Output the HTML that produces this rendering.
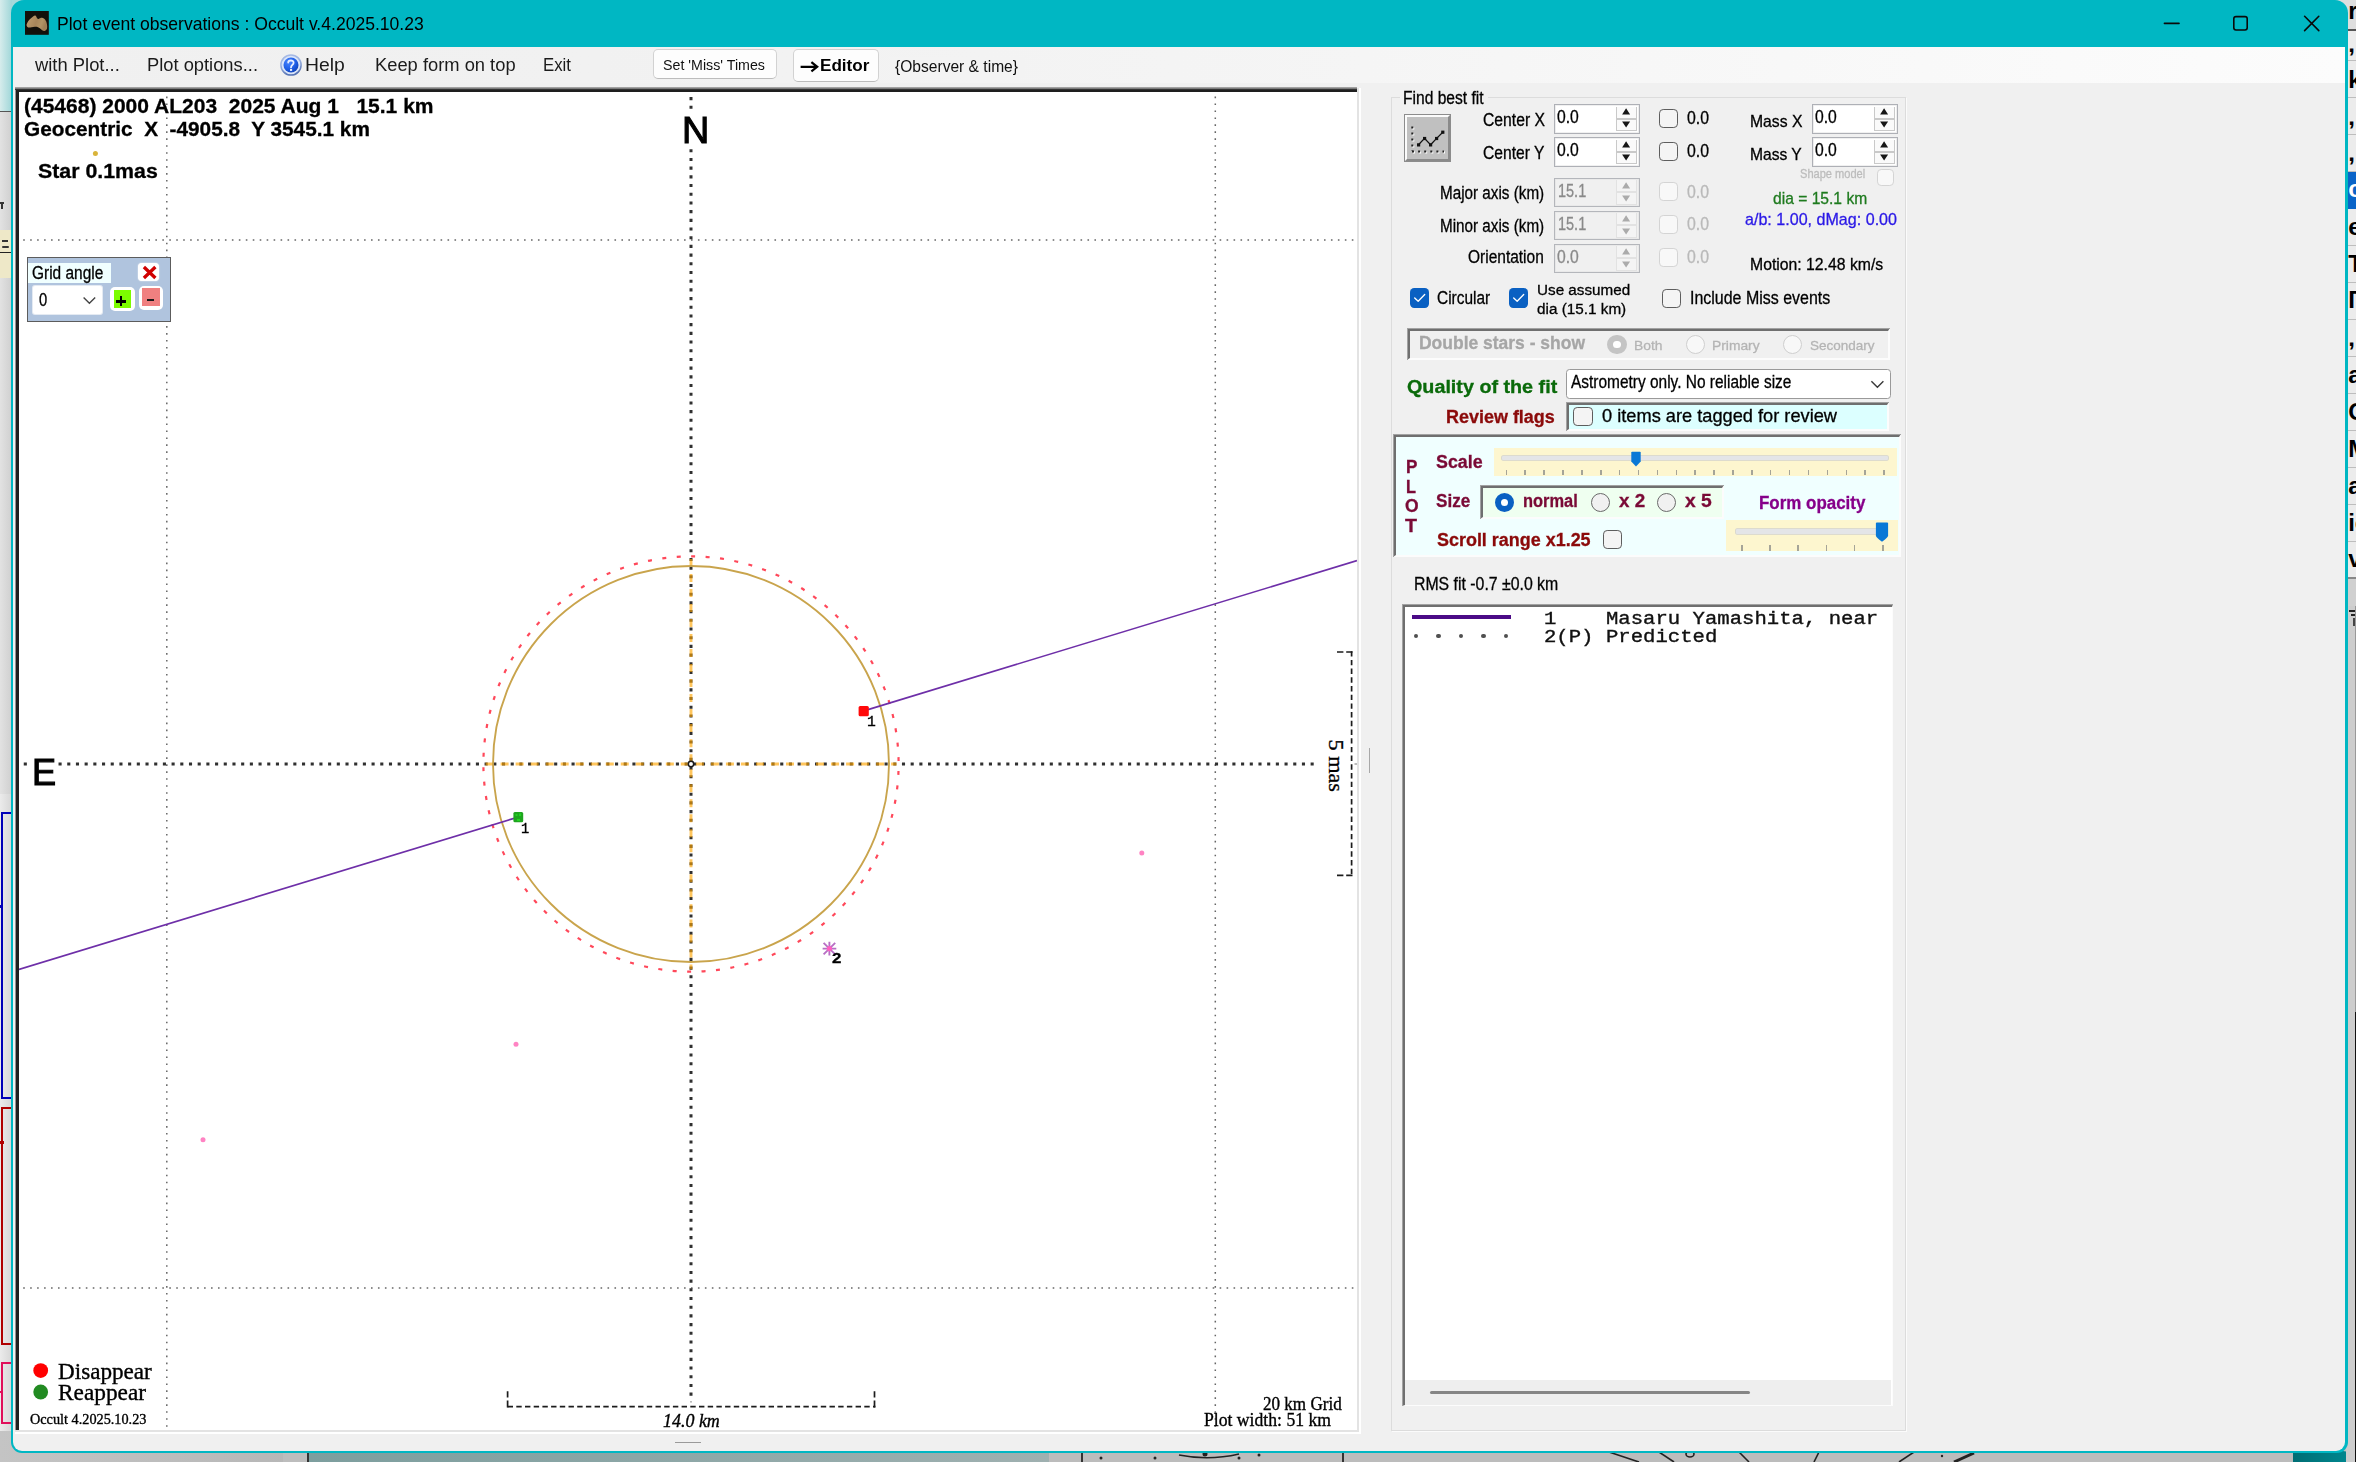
<!DOCTYPE html>
<html><head><meta charset="utf-8"><title>Plot event observations</title>
<style>
html,body{margin:0;padding:0;}
html{width:2356px;height:1462px;overflow:hidden;}
body{width:2356px;height:1462px;position:relative;overflow:hidden;background:#c2c2c2;font-family:"Liberation Sans",sans-serif;}
div,span,svg{position:absolute;}
span{white-space:pre;transform-origin:0 0;display:block;}
</style></head><body>
<div style="left:0;top:0;width:2356px;height:1462px;overflow:hidden">
<div style="left:0px;top:0px;width:12px;height:112px;background:linear-gradient(to right,#d6ecec,#9fd6d8);"></div>
<div style="left:12px;top:0px;width:16px;height:16px;background:#a6d8da;"></div>
<div style="left:0px;top:111px;width:12px;height:1px;background:#555;"></div>
<div style="left:0px;top:112px;width:12px;height:682px;background:linear-gradient(to right,#e2e2e2,#cfcfcf);"></div>
<div style="left:0px;top:794px;width:12px;height:637px;background:linear-gradient(to right,#ebebeb,#d6d6d6);"></div>
<div style="left:0px;top:230px;width:12px;height:48px;background:#eee8c8;"></div>
<div style="left:0px;top:252px;width:12px;height:1px;background:#222;"></div>
<div style="left:2px;top:240px;width:6px;height:2px;background:#333;"></div>
<div style="left:2px;top:246px;width:7px;height:2px;background:#333;border-radius:1px"></div>
<div style="left:0px;top:202px;width:4px;height:2px;background:#333;"></div>
<div style="left:1px;top:204px;width:2px;height:5px;background:#333;"></div>
<div style="left:1px;top:812px;width:14px;height:287px;border:2px solid #0000b8;border-right:none;box-sizing:border-box"></div>
<div style="left:1px;top:1107px;width:14px;height:238px;border:2px solid #b00000;border-right:none;box-sizing:border-box"></div>
<div style="left:1px;top:1362px;width:14px;height:62px;border:2px solid #e0105a;border-right:none;box-sizing:border-box"></div>
<div style="left:0px;top:905px;width:3px;height:3px;background:#0000b8;"></div>
<div style="left:0px;top:1141px;width:4px;height:3px;background:#b00000;"></div>
<div style="left:0px;top:1391px;width:3px;height:2px;background:#e0105a;"></div>
<div style="left:0px;top:1431px;width:308px;height:31px;background:linear-gradient(to right,#c4c4c4,#b6b6b6);"></div>
<div style="left:283px;top:1431px;width:25px;height:31px;background:#bdbdbd;"></div>
<div style="left:307px;top:1450px;width:2px;height:12px;background:#333;"></div>
<div style="left:309px;top:1450px;width:740px;height:12px;background:linear-gradient(to right,#7d9e9e,#9fb0b0);"></div>
<div style="left:1049px;top:1450px;width:1244px;height:12px;background:#bcbcbc;"></div>
<div style="left:1081px;top:1450px;width:2px;height:12px;background:#333;"></div>
<div style="left:1342px;top:1450px;width:2px;height:12px;background:#333;"></div>
<svg style="left:1049px;top:1452px" width="1250" height="10" viewBox="0 0 1250 10"><g fill="none" stroke="#222" stroke-width="1.6"><path d="M560 0 L590 10"/><path d="M610 0 L625 10"/><path d="M690 0 L700 10"/><path d="M770 0 L765 10"/><path d="M865 0 L850 10"/><path d="M925 1 L905 10" stroke-width="3"/><ellipse cx="641" cy="2" rx="4" ry="3"/><path d="M130 3 q30 6 60 -1"/></g><g fill="#222"><circle cx="52" cy="6" r="1.5"/><circle cx="106" cy="6" r="1.5"/><circle cx="156" cy="2" r="2.5"/><circle cx="190" cy="6" r="1.5"/><circle cx="210" cy="3" r="1.5"/><circle cx="893" cy="4" r="1.2"/></g></svg>
<div style="left:2293px;top:1451px;width:58px;height:14px;background:linear-gradient(to right,#006e74,#008890);border-top-right-radius:8px"></div>
<div style="left:2330px;top:0px;width:26px;height:578px;background:#ececec;"></div>
<div style="left:2330px;top:0px;width:26px;height:29.5px;background:#dedede;"></div>
<div style="left:2346px;top:29px;width:10px;height:1.6px;background:#555;"></div>
<div style="left:2346px;top:60px;width:10px;height:1.2px;background:#bdbdbd;"></div>
<div style="left:2346px;top:97px;width:10px;height:1.2px;background:#bdbdbd;"></div>
<div style="left:2346px;top:134px;width:10px;height:1.2px;background:#bdbdbd;"></div>
<div style="left:2346px;top:171px;width:10px;height:1.2px;background:#bdbdbd;"></div>
<div style="left:2346px;top:208px;width:10px;height:1.2px;background:#bdbdbd;"></div>
<div style="left:2346px;top:245px;width:10px;height:1.2px;background:#bdbdbd;"></div>
<div style="left:2346px;top:282px;width:10px;height:1.2px;background:#bdbdbd;"></div>
<div style="left:2346px;top:319px;width:10px;height:1.2px;background:#bdbdbd;"></div>
<div style="left:2346px;top:356px;width:10px;height:1.2px;background:#bdbdbd;"></div>
<div style="left:2346px;top:393px;width:10px;height:1.2px;background:#bdbdbd;"></div>
<div style="left:2346px;top:430px;width:10px;height:1.2px;background:#bdbdbd;"></div>
<div style="left:2346px;top:467px;width:10px;height:1.2px;background:#bdbdbd;"></div>
<div style="left:2346px;top:504px;width:10px;height:1.2px;background:#bdbdbd;"></div>
<div style="left:2346px;top:541px;width:10px;height:1.2px;background:#bdbdbd;"></div>
<div style="left:2346px;top:172px;width:10px;height:36.5px;background:#0a64c8;"></div>
<div style="left:2346px;top:577px;width:10px;height:2px;background:#888;"></div>
<div style="left:2346px;top:579px;width:10px;height:27px;background:#d0d0d0;"></div>
<div style="left:2346px;top:606px;width:10px;height:856px;background:#cdcdcd;"></div>
<div style="left:2354.6px;top:606px;width:1.4px;height:406px;background:#999;"></div>
<div style="left:2354.6px;top:1012px;width:1.4px;height:450px;background:#111;"></div>
<span style="left:2348.2px;top:-1.3000000000000007px;font-size:24px;line-height:24px;font-weight:bold;color:#000">r</span>
<span style="left:2348.2px;top:31.7px;font-size:24px;line-height:24px;font-weight:bold;color:#000">,</span>
<span style="left:2348.2px;top:67.7px;font-size:24px;line-height:24px;font-weight:bold;color:#000">k</span>
<span style="left:2348.2px;top:104.7px;font-size:24px;line-height:24px;font-weight:bold;color:#000">,</span>
<span style="left:2348.2px;top:140.7px;font-size:24px;line-height:24px;font-weight:bold;color:#000">,</span>
<span style="left:2348.2px;top:176.7px;font-size:24px;line-height:24px;font-weight:bold;color:#fff">c</span>
<span style="left:2348.2px;top:214.7px;font-size:24px;line-height:24px;font-weight:bold;color:#000">e</span>
<span style="left:2348.2px;top:251.7px;font-size:24px;line-height:24px;font-weight:bold;color:#000">T</span>
<span style="left:2348.2px;top:287.7px;font-size:24px;line-height:24px;font-weight:bold;color:#000">Γ</span>
<span style="left:2348.2px;top:325.7px;font-size:24px;line-height:24px;font-weight:bold;color:#000">,</span>
<span style="left:2348.2px;top:362.7px;font-size:24px;line-height:24px;font-weight:bold;color:#000">a</span>
<span style="left:2348.2px;top:399.7px;font-size:24px;line-height:24px;font-weight:bold;color:#000">G</span>
<span style="left:2348.2px;top:436.7px;font-size:24px;line-height:24px;font-weight:bold;color:#000">M</span>
<span style="left:2348.2px;top:473.7px;font-size:24px;line-height:24px;font-weight:bold;color:#000">a</span>
<span style="left:2348.2px;top:510.7px;font-size:24px;line-height:24px;font-weight:bold;color:#000">ic</span>
<span style="left:2348.2px;top:546.7px;font-size:24px;line-height:24px;font-weight:bold;color:#000">va</span>
<div style="left:2349px;top:610px;width:6px;height:2px;background:#222;"></div>
<div style="left:2351px;top:614px;width:4px;height:2px;background:#222;"></div>
<div style="left:2353px;top:618px;width:2px;height:8px;background:#444;"></div>
<div style="left:11px;top:0;width:2337px;height:1453px;background:rgb(0,183,195);border-radius:13px 13px 11px 11px"></div>
<div style="left:13px;top:47px;width:2332px;height:1404px;background:#f0f0f0;border-radius:0 0 9px 9px"></div>
<div style="left:13px;top:47px;width:2332px;height:36px;background:linear-gradient(to right,#f0f0f0 0%,#f1f1f1 25%,#f5f5f5 58%,#fcfcfc 100%);"></div>
<svg style="left:25px;top:11px" width="24" height="24" viewBox="0 0 24 24"><defs><filter id="ib" x="-10%" y="-10%" width="120%" height="120%"><feGaussianBlur stdDeviation="0.35"/></filter><linearGradient id="ig" x1="0" y1="0" x2="1" y2="0.3"><stop offset="0" stop-color="#c2a072"/><stop offset="0.55" stop-color="#a8865a"/><stop offset="0.8" stop-color="#b39466"/><stop offset="1" stop-color="#a08056"/></linearGradient></defs><rect width="23.8" height="23.8" fill="#12100b"/><path filter="url(#ib)" fill="url(#ig)" d="M10.2 4.5 C11 4.6 11.6 6.2 12.1 7.3 C12.6 7.9 13 8.1 13.6 8.0 C14.8 7.2 16 6.5 17.0 6.7 C18.4 7 19.4 7.8 20.2 8.7 C21.2 10 21.7 11.4 21.9 12.9 C22.2 14.4 22.3 15.8 22.1 16.9 C21.9 18.2 21.4 19 20.5 19.4 C19.7 19.9 18.8 20 18.1 19.8 C17.2 19.4 16.5 18.6 15.8 18.0 C14.9 17.2 14 16.6 13.0 16.2 C12 15.8 11 15.7 10.0 15.8 C8.8 15.9 7.6 16.1 6.5 16.2 C5.5 16.4 4.6 16.6 3.7 16.5 C2.9 16.4 2.2 15.9 1.9 15.2 C1.6 14.6 1.5 14 1.6 13.4 C2 12.1 2.6 11 3.3 9.9 C4.1 8.9 5 8 6.0 7.3 C6.8 6.5 7.6 5.8 8.4 5.2 C9 4.7 9.6 4.4 10.2 4.5 Z"/></svg>
<span style="left:57.00px;top:15.73px;font-family:'Liberation Sans',sans-serif;font-size:17.8px;line-height:17.8px;color:#000;transform:scaleX(0.9878);">Plot event observations : Occult v.4.2025.10.23</span>
<svg style="left:2150px;top:0" width="190" height="47" viewBox="0 0 190 47"><g fill="none" stroke="#0a0a0a" stroke-width="1.6" stroke-linecap="round"><path d="M14.4 23.4 H29"/><rect x="83.8" y="16.6" width="13.4" height="13.4" rx="2.2"/><path d="M154.6 16.3 L168.8 30.6 M168.8 16.3 L154.6 30.6"/></g></svg>
<span style="left:34.80px;top:55.76px;font-family:'Liberation Sans',sans-serif;font-size:18px;line-height:18px;color:#1b1b1b;transform:scaleX(1.0213);">with Plot...</span>
<span style="left:147.20px;top:55.76px;font-family:'Liberation Sans',sans-serif;font-size:18px;line-height:18px;color:#1b1b1b;transform:scaleX(1.0176);">Plot options...</span>
<span style="left:305.40px;top:55.76px;font-family:'Liberation Sans',sans-serif;font-size:18px;line-height:18px;color:#1b1b1b;transform:scaleX(1.0748);">Help</span>
<span style="left:374.60px;top:55.76px;font-family:'Liberation Sans',sans-serif;font-size:18px;line-height:18px;color:#1b1b1b;transform:scaleX(1.0181);">Keep form on top</span>
<span style="left:543.30px;top:55.76px;font-family:'Liberation Sans',sans-serif;font-size:18px;line-height:18px;color:#1b1b1b;transform:scaleX(0.9328);">Exit</span>
<svg style="left:278.9px;top:53.2px" width="24" height="24" viewBox="0 0 24 24"><defs><radialGradient id="hg" cx="0.35" cy="0.3" r="0.85"><stop offset="0" stop-color="#4a86ff"/><stop offset="0.55" stop-color="#1f5ee6"/><stop offset="1" stop-color="#0b3aa8"/></radialGradient><linearGradient id="hr" x1="0" y1="0" x2="0.3" y2="1"><stop offset="0" stop-color="#a9bce6"/><stop offset="0.5" stop-color="#9cb2e0"/><stop offset="1" stop-color="#5673b4"/></linearGradient></defs><circle cx="12" cy="12" r="10.1" fill="#dbe5f8" stroke="url(#hr)" stroke-width="1.5"/><circle cx="12" cy="12" r="7.5" fill="url(#hg)"/><path d="M9.2 9.6 C9.2 6.9 14.6 6.7 14.6 9.7 C14.6 11.7 12.0 12.1 12.0 14.4" stroke="#e8efff" stroke-width="1.8" fill="none" stroke-linecap="round"/><rect x="11.0" y="16.0" width="2.1" height="1.9" fill="#e8efff"/></svg>
<div style="left:653px;top:49px;width:124px;height:30px;box-sizing:border-box;background:#fdfdfd;border:1px solid #d2d2d2;border-bottom-color:#bcbcbc;border-radius:5px"></div>
<span style="left:662.50px;top:56.80px;font-family:'Liberation Sans',sans-serif;font-size:15.0px;line-height:15.0px;color:#111;transform:scaleX(0.9495);">Set &#x27;Miss&#x27; Times</span>
<div style="left:793px;top:49px;width:86px;height:32.5px;box-sizing:border-box;background:#fdfdfd;border:1px solid #d2d2d2;border-bottom-color:#bcbcbc;border-radius:5px"></div>
<svg style="left:799px;top:58px" width="22" height="18" viewBox="0 0 22 18"><path d="M1.6 8.8 H17.6 M12.4 4.2 L18.2 8.8 L12.4 13.4" fill="none" stroke="#000" stroke-width="2.2" stroke-linejoin="miter"/></svg>
<span style="left:819.60px;top:56.87px;font-family:'Liberation Sans',sans-serif;font-size:17.4px;line-height:17.4px;color:#000;font-weight:bold;transform:scaleX(0.9831);">Editor</span>
<div style="left:890px;top:57px;width:134px;height:20px;background:#f3f3f3;"></div>
<span style="left:895.00px;top:58.44px;font-family:'Liberation Sans',sans-serif;font-size:17.2px;line-height:17.2px;color:#111;transform:scaleX(0.9067);">{Observer &amp; time}</span>
<div style="left:15px;top:88px;width:1346px;height:1346px;background:#fff;"></div>
<div style="left:15px;top:88px;width:1344px;height:1344px;background:#e3e3e3;"></div>
<div style="left:15px;top:87.4px;width:1342px;height:1342.6px;background:linear-gradient(#b4b4b4,#6a6a6a 2px,#333 2.4px);"></div>
<div style="left:15px;top:89.6px;width:1342px;height:1340.4px;background:linear-gradient(to right,#b0b0b0,#6a6a6a 1.2px,#2a2a2a 1.6px);"></div>
<div style="left:16.2px;top:89.6px;width:1340.8px;height:1340.4px;background:#1e1e1e;"></div>
<div style="left:19px;top:92px;width:1338px;height:1338px;background:#fff;"></div>
<svg style="left:19px;top:92px" width="1338" height="1338" viewBox="19 92 1338 1338"><path d="M166.8 96.55 V1430" stroke="#000" stroke-opacity="0.6" stroke-width="1.5" stroke-dasharray="1.6 5.356" fill="none"/><path d="M1215.3 96.55 V1430" stroke="#000" stroke-opacity="0.6" stroke-width="1.5" stroke-dasharray="1.6 5.356" fill="none"/><path d="M23.2 239.9 H1357" stroke="#000" stroke-opacity="0.6" stroke-width="1.5" stroke-dasharray="1.6 5.356" fill="none"/><path d="M23.2 1288.0 H1357" stroke="#000" stroke-opacity="0.6" stroke-width="1.5" stroke-dasharray="1.6 5.356" fill="none"/><path d="M691.0 97.05 V1397" stroke="#303030" stroke-width="3.0" stroke-dasharray="3.1 5.595" fill="none"/><path d="M23.75 764.0 H1318" stroke="#303030" stroke-width="3.0" stroke-dasharray="3.1 5.595" fill="none"/><rect x="1354.5" y="763" width="2.5" height="2" fill="#bbb"/><rect x="690" y="1401" width="2" height="1.6" fill="#bbb"/><path d="M485.6 764.0 H896.6" stroke="rgb(255,165,0)" stroke-opacity="0.63" stroke-width="2.9" stroke-dasharray="8.0 7.02" fill="none"/><path d="M691.0 558.9 V969.3" stroke="rgb(255,165,0)" stroke-opacity="0.63" stroke-width="2.9" stroke-dasharray="8.0 7.02" fill="none"/><circle cx="691.0" cy="764.0" r="198" fill="none" stroke="#c9a44c" stroke-width="1.85"/><circle cx="691.0" cy="764.0" r="207.6" fill="none" stroke="#ff2036" stroke-opacity="0.82" stroke-width="2.2" stroke-dasharray="4.0 10.4934" stroke-dashoffset="-7.0"/><path d="M19 969.4 L514 818.4" stroke="#6e2fa8" stroke-width="1.65" fill="none"/><path d="M868 709.6 L1357 560.6" stroke="#6e2fa8" stroke-width="1.65" fill="none"/><circle cx="691.0" cy="764.0" r="2.7" fill="#fff" stroke="#1a1a1a" stroke-width="1.5"/><rect x="858.6" y="705.9" width="10.2" height="10.4" rx="1.5" fill="#ff0a0a"/><rect x="513.4" y="812.0" width="9.8" height="10.2" rx="1.5" fill="#1fa51f"/><path d="M515.5 814 h2 v2 h-2z M519 813.5 h2 v2.5 h-2z M517 819 h3 v2 h-3z" fill="#22e022" fill-opacity="0.8"/><g stroke="#b86fc4" stroke-width="1.9" stroke-linecap="butt"><path d="M822.6 948.6 H836.3 M829.4 941.8 V955.4 M823.6 942.8 L835.2 954.4 M835.2 942.8 L823.6 954.4"/></g><circle cx="829.4" cy="948.6" r="2.6" fill="#ff5fc0"/><circle cx="1141.8" cy="853.0" r="2.5" fill="#ff7cc0" fill-opacity="0.95"/><circle cx="516.0" cy="1044.2" r="2.5" fill="#ff7cc0" fill-opacity="0.95"/><circle cx="203.0" cy="1139.8" r="2.5" fill="#ff7cc0" fill-opacity="0.95"/><circle cx="95.4" cy="153.4" r="2.5" fill="#d9b43a"/><path d="M507.6 1406.6 H875.4" stroke="#1c1c1c" stroke-width="1.7" stroke-dasharray="5.4 3.3" fill="none"/><path d="M507.6 1391.2 V1397.4 M507.6 1400.4 V1407.5 M874.5 1391.2 V1397.4 M874.5 1400.4 V1407.5" stroke="#1c1c1c" stroke-width="1.7" fill="none"/><path d="M1351.6 651.2 V876.2" stroke="#1c1c1c" stroke-width="1.7" stroke-dasharray="5.4 3.3" fill="none"/><path d="M1337 652 H1343.4 M1346.2 652 H1352.5 M1337 875.3 H1343.4 M1346.2 875.3 H1352.5" stroke="#1c1c1c" stroke-width="1.7" fill="none"/><rect x="1322" y="734" width="26" height="62" fill="#fff"/><text x="0" y="0" transform="translate(1329.3 739.5) rotate(90)" font-family="Liberation Serif, serif" font-size="20" textLength="52.5" lengthAdjust="spacingAndGlyphs" fill="#000" stroke="#000" stroke-width="0.3">5 mas</text><circle cx="40.7" cy="1370.6" r="7.4" fill="#ff0000"/><circle cx="40.7" cy="1392.0" r="7.4" fill="#228b22"/></svg>
<div style="left:682px;top:113px;width:28px;height:34px;background:#fff;"></div>
<span style="left:682.20px;top:112.00px;font-family:'Liberation Sans',sans-serif;font-size:37.8px;line-height:37.8px;color:#000;transform:scaleX(1.0001);-webkit-text-stroke:1.1px;">N</span>
<div style="left:30px;top:756px;width:28px;height:31px;background:#fff;"></div>
<span style="left:31.70px;top:753.50px;font-family:'Liberation Sans',sans-serif;font-size:37.8px;line-height:37.8px;color:#000;transform:scaleX(0.9556);-webkit-text-stroke:1.1px;">E</span>
<span style="left:24.30px;top:95.52px;font-family:'Liberation Sans',sans-serif;font-size:20.3px;line-height:20.3px;color:#000;font-weight:bold;transform:scaleX(1.0358);-webkit-text-stroke:0.3px;">(45468) 2000 AL203  2025 Aug 1   15.1 km</span>
<span style="left:24.30px;top:119.42px;font-family:'Liberation Sans',sans-serif;font-size:20.3px;line-height:20.3px;color:#000;font-weight:bold;transform:scaleX(1.0249);-webkit-text-stroke:0.3px;">Geocentric  X  -4905.8  Y 3545.1 km</span>
<span style="left:37.70px;top:161.42px;font-family:'Liberation Sans',sans-serif;font-size:20.3px;line-height:20.3px;color:#000;font-weight:bold;transform:scaleX(1.0520);-webkit-text-stroke:0.3px;">Star 0.1mas</span>
<span style="left:866.60px;top:715.49px;font-family:'Liberation Mono',monospace;font-size:14.5px;line-height:14.5px;color:#000;transform:scaleX(1.0111);-webkit-text-stroke:0.35px #000;">1</span>
<span style="left:521.00px;top:821.69px;font-family:'Liberation Mono',monospace;font-size:14.5px;line-height:14.5px;color:#000;transform:scaleX(0.9422);-webkit-text-stroke:0.35px #000;">1</span>
<span style="left:831.80px;top:951.38px;font-family:'Liberation Sans',sans-serif;font-size:14.2px;line-height:14.2px;color:#000;font-weight:bold;transform:scaleX(1.1913);-webkit-text-stroke:0.3px;">2</span>
<span style="left:58.20px;top:1360.56px;font-family:'Liberation Serif',serif;font-size:22.5px;line-height:22.5px;color:#000;transform:scaleX(1.0283);-webkit-text-stroke:0.35px;">Disappear</span>
<span style="left:58.20px;top:1381.86px;font-family:'Liberation Serif',serif;font-size:22.5px;line-height:22.5px;color:#000;transform:scaleX(1.0359);-webkit-text-stroke:0.35px;">Reappear</span>
<span style="left:29.80px;top:1412.02px;font-family:'Liberation Serif',serif;font-size:14.3px;line-height:14.3px;color:#000;transform:scaleX(0.9970);-webkit-text-stroke:0.35px;">Occult 4.2025.10.23</span>
<span style="left:662.60px;top:1412.01px;font-family:'Liberation Serif',serif;font-size:18.5px;line-height:18.5px;color:#000;font-style:italic;transform:scaleX(0.9696);-webkit-text-stroke:0.35px;">14.0 km</span>
<span style="left:1262.50px;top:1396.29px;font-family:'Liberation Serif',serif;font-size:17.8px;line-height:17.8px;color:#000;transform:scaleX(0.9598);-webkit-text-stroke:0.35px;">20 km Grid</span>
<span style="left:1204.20px;top:1411.49px;font-family:'Liberation Serif',serif;font-size:18.4px;line-height:18.4px;color:#000;transform:scaleX(0.9597);-webkit-text-stroke:0.35px;">Plot width: 51 km</span>
<div style="left:26.5px;top:257px;width:144px;height:64.5px;box-sizing:border-box;background:#b0c4de;border:1.6px solid #5c5c5c"></div>
<div style="left:28px;top:263px;width:83px;height:19.5px;background:#f0ffff;"></div>
<span style="left:32.00px;top:265.19px;font-family:'Liberation Sans',sans-serif;font-size:17.5px;line-height:17.5px;color:#000;transform:scaleX(0.8830);-webkit-text-stroke:0.3px;">Grid angle</span>
<div style="left:33.4px;top:285.8px;width:68.6px;height:28.2px;background:#fff;border-radius:2px;box-shadow:0 0 0 1px #e4eaf2"></div>
<span style="left:39.40px;top:291.79px;font-family:'Liberation Sans',sans-serif;font-size:17.5px;line-height:17.5px;color:#000;transform:scaleX(0.8424);-webkit-text-stroke:0.3px;">0</span>
<svg style="left:82px;top:295px" width="16" height="11" viewBox="0 0 16 11"><path d="M1.6 2.6 L7.4 8.2 L13.2 2.6" fill="none" stroke="#444" stroke-width="1.4"/></svg>
<div style="left:138.4px;top:262.6px;width:20.2px;height:18.2px;background:#fff;border-radius:4px;box-shadow:0 0 1.5px #fff"></div>
<svg style="left:142px;top:264.5px" width="15" height="15" viewBox="0 0 15 15"><path d="M1.9 2 L13.4 13 M13.4 2 L1.9 13" stroke="#d00000" stroke-width="3.3" fill="none"/></svg>
<div style="left:110.2px;top:287.0px;width:24.4px;height:24.4px;background:#fff;border-radius:5px"></div>
<div style="left:113.5px;top:290.2px;width:17.9px;height:17.6px;background:#7cfc00;"></div>
<div style="left:116.4px;top:300.0px;width:9.4px;height:2.5px;background:#000;"></div>
<div style="left:119.9px;top:296.4px;width:2.5px;height:9.6px;background:#000;"></div>
<div style="left:138.9px;top:285.8px;width:24.2px;height:24.0px;background:#fff;border-radius:5px"></div>
<div style="left:141.9px;top:288.3px;width:18.2px;height:18.0px;background:#f08080;"></div>
<div style="left:146.6px;top:298.6px;width:7.6px;height:2.4px;background:#1a1a1a;"></div>
<div style="left:1369px;top:748px;width:1.4px;height:25px;background:#a8a8a8;"></div>
<div style="left:675px;top:1442px;width:26px;height:1.4px;background:#9a9a9a;"></div>
<div style="left:1391px;top:97px;width:514.5px;height:1334px;box-sizing:border-box;border:1px solid #dcdcdc;box-shadow:1px 1px 0 #fbfbfb"></div>
<div style="left:1400px;top:90px;width:88px;height:16px;background:#f0f0f0;"></div>
<span style="left:1402.80px;top:89.59px;font-family:'Liberation Sans',sans-serif;font-size:17.5px;line-height:17.5px;color:#000;transform:scaleX(0.8909);-webkit-text-stroke:0.3px;">Find best fit</span>
<div style="left:1403.5px;top:114.3px;width:47.8px;height:48px;box-sizing:border-box;background:#c0c0c0;border-top:3.5px solid #fbfbfb;border-left:3.5px solid #fbfbfb;border-bottom:3.5px solid #8a8a8a;border-right:3.5px solid #8a8a8a;outline:1px solid #8c8c8c;outline-offset:-1px"></div>
<svg style="left:1403.5px;top:114.8px" width="48" height="47" viewBox="0 0 48 47"><path d="M9.3 12.5 V37" stroke="#fff" stroke-width="2" stroke-dasharray="2 4" fill="none"/><path d="M9 37.4 H41" stroke="#fff" stroke-width="2" stroke-dasharray="2 4.1" fill="none"/><path d="M8.3 11.5 V36" stroke="#222" stroke-width="2" stroke-dasharray="2 4" fill="none"/><path d="M8 36.4 H40" stroke="#222" stroke-width="2" stroke-dasharray="2 4.1" fill="none"/><path d="M14.5 29.8 L20.5 23.4 L26.6 29.8 L32.6 23.4 L38.8 17.2" stroke="#111" stroke-width="1.25" fill="none"/><g fill="#111"><rect x="13" y="28.3" width="3.2" height="3.2"/><rect x="19" y="21.9" width="3.2" height="3.2"/><rect x="25" y="28.3" width="3.2" height="3.2"/><rect x="31" y="21.9" width="3.2" height="3.2"/><rect x="37.2" y="15.6" width="3.2" height="3.2"/></g></svg>
<span style="left:1482.60px;top:111.59px;font-family:'Liberation Sans',sans-serif;font-size:17.5px;line-height:17.5px;color:#000;transform:scaleX(0.8977);-webkit-text-stroke:0.3px;">Center X</span>
<span style="left:1482.60px;top:144.79px;font-family:'Liberation Sans',sans-serif;font-size:17.5px;line-height:17.5px;color:#000;transform:scaleX(0.8931);-webkit-text-stroke:0.3px;">Center Y</span>
<div style="left:1553.8px;top:104.2px;width:86.6px;height:29.6px;box-sizing:border-box;background:#fff;border:1.9px solid #aeb0b6;box-shadow:inset 0 0 0 0.8px rgba(225,225,225,0.7)"></div>
<div style="left:1616.4px;top:106.60000000000001px;width:20.4px;height:24.6px;background:#c9c9c9;"></div>
<div style="left:1617.0px;top:106.8px;width:19.4px;height:10.8px;background:#fafafa;"></div>
<div style="left:1617.0px;top:119.60000000000001px;width:19.4px;height:10.8px;background:#fafafa;"></div>
<svg style="left:1617.0px;top:104.2px" width="20" height="30" viewBox="0 0 20 30"><path d="M5.1 10.5 L9.1 4.3 L13.1 10.5 Z M5.1 17.6 L13.1 17.6 L9.1 23.4 Z" fill="#161616"/></svg>
<span style="left:1557.00px;top:109.29px;font-family:'Liberation Sans',sans-serif;font-size:17.5px;line-height:17.5px;color:#000;transform:scaleX(0.8961);-webkit-text-stroke:0.3px;">0.0</span>
<div style="left:1553.8px;top:137.2px;width:86.6px;height:29.6px;box-sizing:border-box;background:#fff;border:1.9px solid #aeb0b6;box-shadow:inset 0 0 0 0.8px rgba(225,225,225,0.7)"></div>
<div style="left:1616.4px;top:139.6px;width:20.4px;height:24.6px;background:#c9c9c9;"></div>
<div style="left:1617.0px;top:139.79999999999998px;width:19.4px;height:10.8px;background:#fafafa;"></div>
<div style="left:1617.0px;top:152.6px;width:19.4px;height:10.8px;background:#fafafa;"></div>
<svg style="left:1617.0px;top:137.2px" width="20" height="30" viewBox="0 0 20 30"><path d="M5.1 10.5 L9.1 4.3 L13.1 10.5 Z M5.1 17.6 L13.1 17.6 L9.1 23.4 Z" fill="#161616"/></svg>
<span style="left:1557.00px;top:142.29px;font-family:'Liberation Sans',sans-serif;font-size:17.5px;line-height:17.5px;color:#000;transform:scaleX(0.8961);-webkit-text-stroke:0.3px;">0.0</span>
<div style="left:1658.7px;top:108.5px;width:19px;height:19px;box-sizing:border-box;background:#f4f4f4;border:1.7px solid #5d5d5d;border-radius:4.2px"></div>
<span style="left:1687.20px;top:110.39px;font-family:'Liberation Sans',sans-serif;font-size:17.5px;line-height:17.5px;color:#000;transform:scaleX(0.9043);-webkit-text-stroke:0.3px;">0.0</span>
<div style="left:1658.7px;top:141.6px;width:19px;height:19px;box-sizing:border-box;background:#f4f4f4;border:1.7px solid #5d5d5d;border-radius:4.2px"></div>
<span style="left:1687.20px;top:143.19px;font-family:'Liberation Sans',sans-serif;font-size:17.5px;line-height:17.5px;color:#000;transform:scaleX(0.9043);-webkit-text-stroke:0.3px;">0.0</span>
<span style="left:1750.20px;top:112.72px;font-family:'Liberation Sans',sans-serif;font-size:16.4px;line-height:16.4px;color:#000;transform:scaleX(0.9587);-webkit-text-stroke:0.3px;">Mass X</span>
<span style="left:1750.20px;top:145.72px;font-family:'Liberation Sans',sans-serif;font-size:16.4px;line-height:16.4px;color:#000;transform:scaleX(0.9529);-webkit-text-stroke:0.3px;">Mass Y</span>
<div style="left:1811.7px;top:104.2px;width:86.6px;height:29.6px;box-sizing:border-box;background:#fff;border:1.9px solid #aeb0b6;box-shadow:inset 0 0 0 0.8px rgba(225,225,225,0.7)"></div>
<div style="left:1874.3000000000002px;top:106.60000000000001px;width:20.4px;height:24.6px;background:#c9c9c9;"></div>
<div style="left:1874.9px;top:106.8px;width:19.4px;height:10.8px;background:#fafafa;"></div>
<div style="left:1874.9px;top:119.60000000000001px;width:19.4px;height:10.8px;background:#fafafa;"></div>
<svg style="left:1874.9px;top:104.2px" width="20" height="30" viewBox="0 0 20 30"><path d="M5.1 10.5 L9.1 4.3 L13.1 10.5 Z M5.1 17.6 L13.1 17.6 L9.1 23.4 Z" fill="#161616"/></svg>
<span style="left:1814.90px;top:109.29px;font-family:'Liberation Sans',sans-serif;font-size:17.5px;line-height:17.5px;color:#000;transform:scaleX(0.8961);-webkit-text-stroke:0.3px;">0.0</span>
<div style="left:1811.7px;top:137.2px;width:86.6px;height:29.6px;box-sizing:border-box;background:#fff;border:1.9px solid #aeb0b6;box-shadow:inset 0 0 0 0.8px rgba(225,225,225,0.7)"></div>
<div style="left:1874.3000000000002px;top:139.6px;width:20.4px;height:24.6px;background:#c9c9c9;"></div>
<div style="left:1874.9px;top:139.79999999999998px;width:19.4px;height:10.8px;background:#fafafa;"></div>
<div style="left:1874.9px;top:152.6px;width:19.4px;height:10.8px;background:#fafafa;"></div>
<svg style="left:1874.9px;top:137.2px" width="20" height="30" viewBox="0 0 20 30"><path d="M5.1 10.5 L9.1 4.3 L13.1 10.5 Z M5.1 17.6 L13.1 17.6 L9.1 23.4 Z" fill="#161616"/></svg>
<span style="left:1814.90px;top:142.29px;font-family:'Liberation Sans',sans-serif;font-size:17.5px;line-height:17.5px;color:#000;transform:scaleX(0.8961);-webkit-text-stroke:0.3px;">0.0</span>
<span style="left:1800.00px;top:167.93px;font-family:'Liberation Sans',sans-serif;font-size:12.6px;line-height:12.6px;color:#bcbcbc;transform:scaleX(0.8785);-webkit-text-stroke:0.3px;">Shape model</span>
<div style="left:1876.7px;top:168.6px;width:17.6px;height:17.6px;box-sizing:border-box;background:#f8f8f8;border:1.3px solid #d4d4d4;border-radius:4.2px"></div>
<span style="left:1440.00px;top:184.79px;font-family:'Liberation Sans',sans-serif;font-size:17.5px;line-height:17.5px;color:#000;transform:scaleX(0.8713);-webkit-text-stroke:0.3px;">Major axis (km)</span>
<span style="left:1440.00px;top:217.89px;font-family:'Liberation Sans',sans-serif;font-size:17.5px;line-height:17.5px;color:#000;transform:scaleX(0.8713);-webkit-text-stroke:0.3px;">Minor axis (km)</span>
<span style="left:1467.60px;top:249.49px;font-family:'Liberation Sans',sans-serif;font-size:17.5px;line-height:17.5px;color:#000;transform:scaleX(0.8854);-webkit-text-stroke:0.3px;">Orientation</span>
<div style="left:1553.8px;top:177.6px;width:86.6px;height:29.6px;box-sizing:border-box;background:#f0f0f0;border:1.9px solid #b4b6bb;box-shadow:inset 0 0 0 0.8px rgba(225,225,225,0.7)"></div>
<div style="left:1616.4px;top:180.0px;width:20.4px;height:24.6px;background:#e2e2e2;"></div>
<div style="left:1617.0px;top:180.2px;width:19.4px;height:10.8px;background:#f4f4f4;"></div>
<div style="left:1617.0px;top:193.0px;width:19.4px;height:10.8px;background:#f4f4f4;"></div>
<svg style="left:1617.0px;top:177.6px" width="20" height="30" viewBox="0 0 20 30"><path d="M5.1 10.5 L9.1 4.3 L13.1 10.5 Z M5.1 17.6 L13.1 17.6 L9.1 23.4 Z" fill="#ababab"/></svg>
<span style="left:1558.20px;top:182.69px;font-family:'Liberation Sans',sans-serif;font-size:17.5px;line-height:17.5px;color:#8a8a8a;transform:scaleX(0.8279);-webkit-text-stroke:0.3px;">15.1</span>
<div style="left:1553.8px;top:210.6px;width:86.6px;height:29.6px;box-sizing:border-box;background:#f0f0f0;border:1.9px solid #b4b6bb;box-shadow:inset 0 0 0 0.8px rgba(225,225,225,0.7)"></div>
<div style="left:1616.4px;top:213.0px;width:20.4px;height:24.6px;background:#e2e2e2;"></div>
<div style="left:1617.0px;top:213.2px;width:19.4px;height:10.8px;background:#f4f4f4;"></div>
<div style="left:1617.0px;top:226.0px;width:19.4px;height:10.8px;background:#f4f4f4;"></div>
<svg style="left:1617.0px;top:210.6px" width="20" height="30" viewBox="0 0 20 30"><path d="M5.1 10.5 L9.1 4.3 L13.1 10.5 Z M5.1 17.6 L13.1 17.6 L9.1 23.4 Z" fill="#ababab"/></svg>
<span style="left:1558.20px;top:215.69px;font-family:'Liberation Sans',sans-serif;font-size:17.5px;line-height:17.5px;color:#8a8a8a;transform:scaleX(0.8279);-webkit-text-stroke:0.3px;">15.1</span>
<div style="left:1553.8px;top:243.8px;width:86.6px;height:29.6px;box-sizing:border-box;background:#f0f0f0;border:1.9px solid #b4b6bb;box-shadow:inset 0 0 0 0.8px rgba(225,225,225,0.7)"></div>
<div style="left:1616.4px;top:246.20000000000002px;width:20.4px;height:24.6px;background:#e2e2e2;"></div>
<div style="left:1617.0px;top:246.4px;width:19.4px;height:10.8px;background:#f4f4f4;"></div>
<div style="left:1617.0px;top:259.2px;width:19.4px;height:10.8px;background:#f4f4f4;"></div>
<svg style="left:1617.0px;top:243.8px" width="20" height="30" viewBox="0 0 20 30"><path d="M5.1 10.5 L9.1 4.3 L13.1 10.5 Z M5.1 17.6 L13.1 17.6 L9.1 23.4 Z" fill="#ababab"/></svg>
<span style="left:1557.00px;top:248.89px;font-family:'Liberation Sans',sans-serif;font-size:17.5px;line-height:17.5px;color:#8a8a8a;transform:scaleX(0.8961);-webkit-text-stroke:0.3px;">0.0</span>
<div style="left:1658.7px;top:182.2px;width:19px;height:19px;box-sizing:border-box;background:#f8f8f8;border:1.3px solid #d4d4d4;border-radius:4.2px"></div>
<span style="left:1687.20px;top:183.79px;font-family:'Liberation Sans',sans-serif;font-size:17.5px;line-height:17.5px;color:#b9b9b9;transform:scaleX(0.9043);-webkit-text-stroke:0.3px;">0.0</span>
<div style="left:1658.7px;top:215.4px;width:19px;height:19px;box-sizing:border-box;background:#f8f8f8;border:1.3px solid #d4d4d4;border-radius:4.2px"></div>
<span style="left:1687.20px;top:216.39px;font-family:'Liberation Sans',sans-serif;font-size:17.5px;line-height:17.5px;color:#b9b9b9;transform:scaleX(0.9043);-webkit-text-stroke:0.3px;">0.0</span>
<div style="left:1658.7px;top:248.2px;width:19px;height:19px;box-sizing:border-box;background:#f8f8f8;border:1.3px solid #d4d4d4;border-radius:4.2px"></div>
<span style="left:1687.20px;top:249.39px;font-family:'Liberation Sans',sans-serif;font-size:17.5px;line-height:17.5px;color:#b9b9b9;transform:scaleX(0.9043);-webkit-text-stroke:0.3px;">0.0</span>
<span style="left:1772.60px;top:190.42px;font-family:'Liberation Sans',sans-serif;font-size:16.4px;line-height:16.4px;color:#1e7a1e;transform:scaleX(0.9529);-webkit-text-stroke:0.3px;">dia = 15.1 km</span>
<span style="left:1744.60px;top:211.22px;font-family:'Liberation Sans',sans-serif;font-size:16.4px;line-height:16.4px;color:#2a18e6;transform:scaleX(0.9811);-webkit-text-stroke:0.3px;">a/b: 1.00, dMag: 0.00</span>
<span style="left:1750.20px;top:256.22px;font-family:'Liberation Sans',sans-serif;font-size:16.4px;line-height:16.4px;color:#000;transform:scaleX(0.9618);-webkit-text-stroke:0.3px;">Motion: 12.48 km/s</span>
<div style="left:1409.5px;top:288.4px;width:19.4px;height:19.4px;box-sizing:border-box;background:#0a60c2;border-radius:4.2px"></div>
<svg style="left:1409.5px;top:288.4px" width="19.4" height="19.4" viewBox="0 0 19 19"><path d="M4.6 9.8 L8.0 13.0 L14.4 6.4" stroke="#fff" stroke-width="1.3" fill="none" stroke-linecap="round" stroke-linejoin="round"/></svg>
<span style="left:1437.40px;top:289.89px;font-family:'Liberation Sans',sans-serif;font-size:17.5px;line-height:17.5px;color:#000;transform:scaleX(0.8823);-webkit-text-stroke:0.3px;">Circular</span>
<div style="left:1508.6px;top:288.4px;width:19.4px;height:19.4px;box-sizing:border-box;background:#0a60c2;border-radius:4.2px"></div>
<svg style="left:1508.6px;top:288.4px" width="19.4" height="19.4" viewBox="0 0 19 19"><path d="M4.6 9.8 L8.0 13.0 L14.4 6.4" stroke="#fff" stroke-width="1.3" fill="none" stroke-linecap="round" stroke-linejoin="round"/></svg>
<span style="left:1537.40px;top:281.56px;font-family:'Liberation Sans',sans-serif;font-size:15.4px;line-height:15.4px;color:#000;transform:scaleX(0.9903);-webkit-text-stroke:0.3px;">Use assumed</span>
<span style="left:1537.40px;top:300.76px;font-family:'Liberation Sans',sans-serif;font-size:15.4px;line-height:15.4px;color:#000;transform:scaleX(0.9932);-webkit-text-stroke:0.3px;">dia (15.1 km)</span>
<div style="left:1661.6px;top:288.6px;width:19.2px;height:19.2px;box-sizing:border-box;background:#f4f4f4;border:1.7px solid #5d5d5d;border-radius:4.2px"></div>
<span style="left:1690.00px;top:289.89px;font-family:'Liberation Sans',sans-serif;font-size:17.5px;line-height:17.5px;color:#000;transform:scaleX(0.9122);-webkit-text-stroke:0.3px;">Include Miss events</span>
<div style="left:1407px;top:328px;width:482.5px;height:32px;box-sizing:border-box;background:#f0f0f0;border-top:3px solid #6f6f6f;border-left:3px solid #6f6f6f;border-bottom:2px solid #fcfcfc;border-right:2px solid #fcfcfc"></div>
<div style="left:1407px;top:328px;width:482.5px;height:1px;background:#a2a2a2;"></div>
<div style="left:1407px;top:328px;width:1px;height:32px;background:#a2a2a2;"></div>
<span style="left:1419.40px;top:335.39px;font-family:'Liberation Sans',sans-serif;font-size:17.5px;line-height:17.5px;color:#a6a6a6;font-weight:bold;transform:scaleX(0.9983);-webkit-text-stroke:0.3px;">Double stars - show</span>
<div style="left:1607.3px;top:335.1px;width:19.4px;height:19.4px;box-sizing:border-box;background:#fff;border:6.4px solid #c4c4c4;border-radius:50%"></div>
<span style="left:1634.40px;top:339.19px;font-family:'Liberation Sans',sans-serif;font-size:13.6px;line-height:13.6px;color:#b4b4b4;transform:scaleX(1.0226);-webkit-text-stroke:0.3px;">Both</span>
<div style="left:1685.5px;top:335.1px;width:19.4px;height:19.4px;box-sizing:border-box;background:#f8f8f8;border:1.5px solid #cfcfcf;border-radius:50%"></div>
<span style="left:1712.20px;top:339.19px;font-family:'Liberation Sans',sans-serif;font-size:13.6px;line-height:13.6px;color:#b4b4b4;transform:scaleX(1.0165);-webkit-text-stroke:0.3px;">Primary</span>
<div style="left:1783.0px;top:335.1px;width:19.4px;height:19.4px;box-sizing:border-box;background:#f8f8f8;border:1.5px solid #cfcfcf;border-radius:50%"></div>
<span style="left:1810.40px;top:339.19px;font-family:'Liberation Sans',sans-serif;font-size:13.6px;line-height:13.6px;color:#b4b4b4;transform:scaleX(0.9938);-webkit-text-stroke:0.3px;">Secondary</span>
<span style="left:1407.20px;top:377.96px;font-family:'Liberation Sans',sans-serif;font-size:18.0px;line-height:18.0px;color:#0a6a0a;font-weight:bold;transform:scaleX(1.0964);-webkit-text-stroke:0.3px;">Quality of the fit</span>
<div style="left:1566px;top:368.5px;width:324.6px;height:30px;box-sizing:border-box;background:#fff;border:1.4px solid #9a9a9a;border-radius:3.5px"></div>
<span style="left:1570.60px;top:374.49px;font-family:'Liberation Sans',sans-serif;font-size:17.5px;line-height:17.5px;color:#000;transform:scaleX(0.8829);-webkit-text-stroke:0.3px;">Astrometry only. No reliable size</span>
<svg style="left:1868px;top:377px" width="20" height="14" viewBox="0 0 20 14"><path d="M3.4 4.2 L9.4 10.2 L15.4 4.2" fill="none" stroke="#3a3a3a" stroke-width="1.4"/></svg>
<span style="left:1446.20px;top:407.86px;font-family:'Liberation Sans',sans-serif;font-size:18.0px;line-height:18.0px;color:#8b0a0a;font-weight:bold;transform:scaleX(0.9977);-webkit-text-stroke:0.3px;">Review flags</span>
<div style="left:1566px;top:401.6px;width:323px;height:29.4px;box-sizing:border-box;background:#dcffff;border-top:3px solid #6f6f6f;border-left:3px solid #6f6f6f;border-bottom:2px solid #fcfcfc;border-right:2px solid #fcfcfc"></div>
<div style="left:1566px;top:401.6px;width:323px;height:1px;background:#a2a2a2;"></div>
<div style="left:1566px;top:401.6px;width:1px;height:29.4px;background:#a2a2a2;"></div>
<div style="left:1573.4px;top:407.0px;width:19.2px;height:19.2px;box-sizing:border-box;background:#f4f4f4;border:1.7px solid #5d5d5d;border-radius:4.2px"></div>
<span style="left:1601.60px;top:408.03px;font-family:'Liberation Sans',sans-serif;font-size:17.8px;line-height:17.8px;color:#000;transform:scaleX(1.0249);-webkit-text-stroke:0.3px;">0 items are tagged for review</span>
<div style="left:1393.4px;top:434.4px;width:508px;height:122.4px;box-sizing:border-box;background:#f0ffff;border-top:3.4px solid #6f6f6f;border-left:3.4px solid #6f6f6f;border-bottom:2px solid #fcfcfc;border-right:2px solid #fcfcfc"></div>
<div style="left:1393.4px;top:434.4px;width:508px;height:1px;background:#a2a2a2;"></div>
<div style="left:1393.4px;top:434.4px;width:1px;height:122.4px;background:#a2a2a2;"></div>
<span style="left:1405.60px;top:459.10px;font-family:'Liberation Sans',sans-serif;font-size:17.6px;line-height:17.6px;color:#7a0a36;font-weight:bold;transform:scaleX(0.9702);-webkit-text-stroke:0.3px;">P</span>
<span style="left:1406.40px;top:478.60px;font-family:'Liberation Sans',sans-serif;font-size:17.6px;line-height:17.6px;color:#7a0a36;font-weight:bold;transform:scaleX(0.9302);-webkit-text-stroke:0.3px;">L</span>
<span style="left:1404.80px;top:498.10px;font-family:'Liberation Sans',sans-serif;font-size:17.6px;line-height:17.6px;color:#7a0a36;font-weight:bold;transform:scaleX(0.9936);-webkit-text-stroke:0.3px;">O</span>
<span style="left:1405.40px;top:517.60px;font-family:'Liberation Sans',sans-serif;font-size:17.6px;line-height:17.6px;color:#7a0a36;font-weight:bold;transform:scaleX(1.1163);-webkit-text-stroke:0.3px;">T</span>
<span style="left:1436.00px;top:452.76px;font-family:'Liberation Sans',sans-serif;font-size:18.0px;line-height:18.0px;color:#7a0a36;font-weight:bold;transform:scaleX(0.9905);-webkit-text-stroke:0.3px;">Scale</span>
<span style="left:1436.00px;top:492.06px;font-family:'Liberation Sans',sans-serif;font-size:18.0px;line-height:18.0px;color:#7a0a36;font-weight:bold;transform:scaleX(0.9492);-webkit-text-stroke:0.3px;">Size</span>
<span style="left:1437.40px;top:531.06px;font-family:'Liberation Sans',sans-serif;font-size:18.0px;line-height:18.0px;color:#8b0a0a;font-weight:bold;transform:scaleX(0.9968);-webkit-text-stroke:0.3px;">Scroll range x1.25</span>
<div style="left:1603.3px;top:530.2px;width:18.8px;height:18.8px;box-sizing:border-box;background:#f4f4f4;border:1.7px solid #5d5d5d;border-radius:4.2px"></div>
<div style="left:1493.5px;top:447.6px;width:403.8px;height:28.0px;background:#fdf6cf;"></div>
<div style="left:1501.6px;top:455.6px;width:386.2px;height:4.6px;background:#e4e5e7;box-shadow:0 0 0 0.8px #d2d2ce;border-radius:1px"></div>
<div style="left:1505.6px;top:470.0px;width:1.5px;height:5.4px;background:#a5a498;"></div>
<div style="left:1524.485px;top:470.0px;width:1.5px;height:5.4px;background:#a5a498;"></div>
<div style="left:1543.37px;top:470.0px;width:1.5px;height:5.4px;background:#a5a498;"></div>
<div style="left:1562.2549999999999px;top:470.0px;width:1.5px;height:5.4px;background:#a5a498;"></div>
<div style="left:1581.1399999999999px;top:470.0px;width:1.5px;height:5.4px;background:#a5a498;"></div>
<div style="left:1600.0249999999999px;top:470.0px;width:1.5px;height:5.4px;background:#a5a498;"></div>
<div style="left:1618.9099999999999px;top:470.0px;width:1.5px;height:5.4px;background:#a5a498;"></div>
<div style="left:1637.7949999999998px;top:470.0px;width:1.5px;height:5.4px;background:#a5a498;"></div>
<div style="left:1656.6799999999998px;top:470.0px;width:1.5px;height:5.4px;background:#a5a498;"></div>
<div style="left:1675.5649999999998px;top:470.0px;width:1.5px;height:5.4px;background:#a5a498;"></div>
<div style="left:1694.45px;top:470.0px;width:1.5px;height:5.4px;background:#a5a498;"></div>
<div style="left:1713.3349999999998px;top:470.0px;width:1.5px;height:5.4px;background:#a5a498;"></div>
<div style="left:1732.22px;top:470.0px;width:1.5px;height:5.4px;background:#a5a498;"></div>
<div style="left:1751.105px;top:470.0px;width:1.5px;height:5.4px;background:#a5a498;"></div>
<div style="left:1769.99px;top:470.0px;width:1.5px;height:5.4px;background:#a5a498;"></div>
<div style="left:1788.875px;top:470.0px;width:1.5px;height:5.4px;background:#a5a498;"></div>
<div style="left:1807.76px;top:470.0px;width:1.5px;height:5.4px;background:#a5a498;"></div>
<div style="left:1826.645px;top:470.0px;width:1.5px;height:5.4px;background:#a5a498;"></div>
<div style="left:1845.53px;top:470.0px;width:1.5px;height:5.4px;background:#a5a498;"></div>
<div style="left:1864.415px;top:470.0px;width:1.5px;height:5.4px;background:#a5a498;"></div>
<div style="left:1883.3px;top:470.0px;width:1.5px;height:5.4px;background:#a5a498;"></div>
<svg style="left:1630px;top:451px" width="12" height="17" viewBox="0 0 12 17"><path d="M1.3 1.6 Q1.3 0.8 2.1 0.8 H9.9 Q10.7 0.8 10.7 1.6 V10.6 L6 15.6 L1.3 10.6 Z" fill="#0a78d6"/></svg>
<div style="left:1480.4px;top:485.4px;width:243.8px;height:34px;box-sizing:border-box;background:#effff0;border-top:3.2px solid #6f6f6f;border-left:3.2px solid #6f6f6f;border-bottom:2px solid #fcfcfc;border-right:2px solid #fcfcfc"></div>
<div style="left:1480.4px;top:485.4px;width:243.8px;height:1px;background:#a2a2a2;"></div>
<div style="left:1480.4px;top:485.4px;width:1px;height:34px;background:#a2a2a2;"></div>
<div style="left:1494.8999999999999px;top:492.5px;width:19.4px;height:19.4px;box-sizing:border-box;background:#fff;border:6.4px solid #0a60c2;border-radius:50%"></div>
<span style="left:1523.20px;top:492.06px;font-family:'Liberation Sans',sans-serif;font-size:18.0px;line-height:18.0px;color:#7a0a36;font-weight:bold;transform:scaleX(0.9131);-webkit-text-stroke:0.3px;">normal</span>
<div style="left:1590.8999999999999px;top:492.5px;width:19.4px;height:19.4px;box-sizing:border-box;background:#f1f1f1;border:1.5px solid #6a6a6a;border-radius:50%"></div>
<span style="left:1618.80px;top:492.06px;font-family:'Liberation Sans',sans-serif;font-size:18.0px;line-height:18.0px;color:#7a0a36;font-weight:bold;transform:scaleX(1.0467);-webkit-text-stroke:0.3px;">x 2</span>
<div style="left:1657.1px;top:492.5px;width:19.4px;height:19.4px;box-sizing:border-box;background:#f1f1f1;border:1.5px solid #6a6a6a;border-radius:50%"></div>
<span style="left:1684.80px;top:492.06px;font-family:'Liberation Sans',sans-serif;font-size:18.0px;line-height:18.0px;color:#7a0a36;font-weight:bold;transform:scaleX(1.0707);-webkit-text-stroke:0.3px;">x 5</span>
<span style="left:1758.80px;top:493.76px;font-family:'Liberation Sans',sans-serif;font-size:18.0px;line-height:18.0px;color:#86008a;font-weight:bold;transform:scaleX(0.9413);-webkit-text-stroke:0.3px;">Form opacity</span>
<div style="left:1726.0px;top:519.6px;width:172.4px;height:31.6px;background:#fdf6cf;"></div>
<div style="left:1735.6px;top:529.4px;width:151.6px;height:4.6px;background:#e4e5e7;box-shadow:0 0 0 0.8px #d2d2ce;border-radius:1px"></div>
<div style="left:1741.1px;top:545.0px;width:1.5px;height:5.8px;background:#a5a498;"></div>
<div style="left:1769.28px;top:545.0px;width:1.5px;height:5.8px;background:#a5a498;"></div>
<div style="left:1797.4599999999998px;top:545.0px;width:1.5px;height:5.8px;background:#a5a498;"></div>
<div style="left:1825.6399999999999px;top:545.0px;width:1.5px;height:5.8px;background:#a5a498;"></div>
<div style="left:1853.82px;top:545.0px;width:1.5px;height:5.8px;background:#a5a498;"></div>
<div style="left:1882.0px;top:545.0px;width:1.5px;height:5.8px;background:#a5a498;"></div>
<svg style="left:1875px;top:522px" width="14" height="21" viewBox="0 0 14 21"><path d="M0.9 1.6 Q0.9 0.6 1.9 0.6 H12.1 Q13.1 0.6 13.1 1.6 V13.4 Q13.1 15.4 7 19.8 Q0.9 15.4 0.9 13.4 Z" fill="#0a78d6"/></svg>
<span style="left:1414.20px;top:575.69px;font-family:'Liberation Sans',sans-serif;font-size:17.5px;line-height:17.5px;color:#000;transform:scaleX(0.9048);-webkit-text-stroke:0.3px;">RMS fit -0.7 ±0.0 km</span>
<div style="left:1402.2px;top:603.6px;width:490.6px;height:802.6px;box-sizing:border-box;background:#fff;border-top:3.2px solid #6f6f6f;border-left:3.2px solid #6f6f6f;border-bottom:1.6px solid #fcfcfc;border-right:1.6px solid #fcfcfc"></div>
<div style="left:1402.2px;top:603.6px;width:490.6px;height:1px;background:#a2a2a2;"></div>
<div style="left:1402.2px;top:603.6px;width:1px;height:802.6px;background:#a2a2a2;"></div>
<div style="left:1405.4px;top:1380.4px;width:485.8px;height:24.2px;background:#eeeeee;"></div>
<div style="left:1430.4px;top:1390.6px;width:320px;height:3.2px;background:#858585;border-radius:2px"></div>
<div style="left:1412.3px;top:615.2px;width:99.2px;height:3.4px;background:#4b0a86;"></div>
<div style="left:1414.00px;top:633.50px;width:4.4px;height:4.4px;border-radius:50%;background:#505050"></div>
<div style="left:1436.45px;top:633.50px;width:4.4px;height:4.4px;border-radius:50%;background:#505050"></div>
<div style="left:1458.90px;top:633.50px;width:4.4px;height:4.4px;border-radius:50%;background:#505050"></div>
<div style="left:1481.35px;top:633.50px;width:4.4px;height:4.4px;border-radius:50%;background:#505050"></div>
<div style="left:1503.80px;top:633.50px;width:4.4px;height:4.4px;border-radius:50%;background:#505050"></div>
<span style="left:1543.60px;top:610.66px;font-family:'Liberation Mono',monospace;font-size:17.8px;line-height:17.8px;color:#111;transform:scaleX(1.1591);-webkit-text-stroke:0.35px;">1</span>
<span style="left:1605.60px;top:610.66px;font-family:'Liberation Mono',monospace;font-size:17.8px;line-height:17.8px;color:#111;transform:scaleX(1.1592);-webkit-text-stroke:0.35px;">Masaru Yamashita, near</span>
<span style="left:1543.60px;top:628.96px;font-family:'Liberation Mono',monospace;font-size:17.8px;line-height:17.8px;color:#111;transform:scaleX(1.1591);-webkit-text-stroke:0.35px;">2(P)</span>
<span style="left:1605.60px;top:628.96px;font-family:'Liberation Mono',monospace;font-size:17.8px;line-height:17.8px;color:#111;transform:scaleX(1.1591);-webkit-text-stroke:0.35px;">Predicted</span>
</div>
</body></html>
